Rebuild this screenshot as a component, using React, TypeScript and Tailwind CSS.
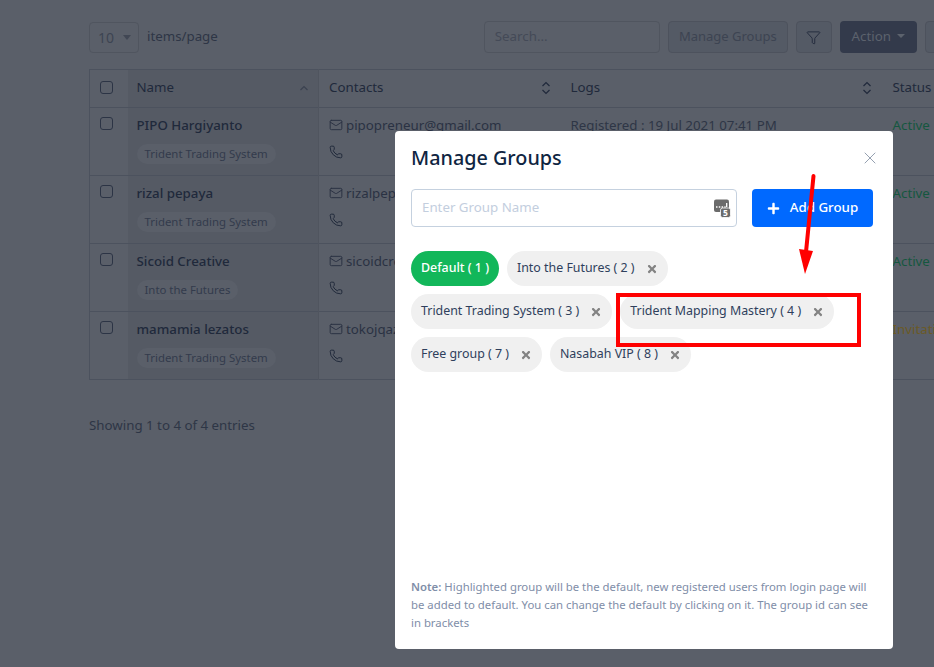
import React from 'react';
import { Mail, Phone, Funnel, X } from 'lucide-react';
import { FaPlus, FaTimes } from 'react-icons/fa';

const rows = [
  { name: 'PIPO Hargiyanto', group: 'Trident Trading System', email: 'pipopreneur@gmail.com', log: 'Registered : 19 Jul 2021 07:41 PM', status: 'Active' },
  { name: 'rizal pepaya', group: 'Trident Trading System', email: 'rizalpepaya@gmail.com', log: 'Registered : 19 Jul 2021 07:12 PM', status: 'Active' },
  { name: 'Sicoid Creative', group: 'Into the Futures', email: 'sicoidcreative@gmail.com', log: 'Registered : 18 Jul 2021 02:25 PM', status: 'Active' },
  { name: 'mamamia lezatos', group: 'Trident Trading System', email: 'tokojqaz@gmail.com', log: 'Registered : 18 Jul 2021 09:03 AM', status: 'Invitation' },
];

const groups = [
  [{ label: 'Into the Futures ( 2 )' }],
  [{ label: 'Trident Trading System ( 3 )' }, { label: 'Trident Mapping Mastery ( 4 )' }],
  [{ label: 'Free group ( 7 )' }, { label: 'Nasabah VIP ( 8 )' }],
];

function SortIcon() {
  return (
    <svg width="10" height="14" viewBox="0 0 10 14" fill="none" stroke="currentColor" strokeWidth="1.2">
      <path d="M1.5 5 5 1.5 8.5 5M1.5 9 5 12.5 8.5 9" />
    </svg>
  );
}

function Chip({ label }: { label: string }) {
  return (
    <div className="flex h-[35px] items-center gap-[11px] rounded-full bg-[#f0f0f0] px-[10px] text-[12.4px] text-[#2f3f5c]">
      <span>{label}</span>
      <FaTimes className="text-[12px] text-[#838383]" />
    </div>
  );
}

export default function App() {
  return (
    // page colours are already dimmed, the way they look under the modal backdrop
    <div className="relative h-[667px] w-[934px] overflow-hidden bg-[#5a5f69] text-[#20293b] [font-family:'Noto_Sans',sans-serif]">
      <div className="w-[1100px] pl-[89px] pt-[21px]">
        <div className="flex items-center">
          <div className="flex h-[31px] w-[50px] items-center justify-between rounded border border-[#50555f] pl-2 pr-[7px] text-[14px] text-[#3d4452]">
            10
            <span className="h-0 w-0 border-x-4 border-t-[5px] border-x-transparent border-t-[#414754]" />
          </div>
          <span className="ml-2 text-[13.3px] text-[#2e3646]">items/page</span>
          <div className="ml-[266px] flex h-[32px] w-[176px] items-center rounded border border-[#50555f] px-2.5 text-[13.3px] text-[#444a57]">Search...</div>
          <div className="ml-2 flex h-[32px] w-[120px] items-center justify-center rounded border border-[#4d525d] bg-[#545a65] text-[13px] text-[#3d4452]">Manage Groups</div>
          <div className="ml-2 flex h-[32px] w-[36px] items-center justify-center rounded border border-[#4d525d] bg-[#545a65] text-[#252d3f]">
            <Funnel size={15} strokeWidth={1.6} />
          </div>
          <div className="ml-2 flex h-[32px] w-[77px] items-center justify-center gap-1.5 rounded bg-[#333a4b] text-[13.3px] text-[#5c626d]">
            Action
            <span className="mb-0.5 h-0 w-0 border-x-4 border-t-[4px] border-x-transparent border-t-[#5c626d]" />
          </div>
          <div className="ml-2 h-[32px] w-[40px] rounded border border-[#4d525d] bg-[#545a65]" />
        </div>

        <table className="mt-4 table-fixed border-collapse border border-[#4c525e] text-[13.3px]">
          <thead>
            <tr className="h-[38px] border-b border-[#4c525e]">
              <th className="w-[38px] pl-[10px] text-left align-middle">
                <span className="-mt-[3px] block size-[13px] rounded-[3px] border border-[#2c3445]" />
              </th>
              <th className="w-[191px] bg-[#555a64] px-2.5 pb-0.5 pl-[9px] text-left font-normal">
                <div className="flex items-center justify-between">Name
                  <svg width="10" height="6" viewBox="0 0 10 6" fill="none" stroke="#3b4250" strokeWidth="1.2" className="mr-[-1px]"><path d="M1.5 5 5 1.5 8.5 5" /></svg>
                </div>
              </th>
              <th className="w-[242px] border-l border-[#50555f] px-2.5 pb-0.5 text-left font-normal">
                <div className="flex items-center justify-between">Contacts<SortIcon /></div>
              </th>
              <th className="w-[321px] px-2.5 pb-0.5 text-left font-normal">
                <div className="flex items-center justify-between">Logs<SortIcon /></div>
              </th>
              <th className="w-[150px] px-2.5 pb-0.5 pl-[11px] text-left font-normal">Status</th>
            </tr>
          </thead>
          <tbody>
            {rows.map((r) => (
              <tr key={r.name} className="h-[68px] border-b border-[#4c525e]">
                <td className="pl-[10px] pt-[9px] align-top">
                  <span className="block size-[13px] rounded-[3px] border border-[#2c3445]" />
                </td>
                <td className="bg-[#555a64] px-2.5 pl-[9px] pt-[7px] align-top">
                  <div className="leading-5 font-medium">{r.name}</div>
                  <span className="mt-[9px] inline-block rounded-full bg-[#5a5f69] px-2 text-[11.4px] leading-5 text-[#333b4c]">{r.group}</span>
                </td>
                <td className="border-l border-[#50555f] px-2.5 pt-[7px] align-top">
                  <div className="flex items-center gap-[3px] leading-5 text-[#2a3243]"><Mail size={14} strokeWidth={1.7} />{r.email}</div>
                  <div className="mt-[10px]"><Phone size={14} strokeWidth={1.7} /></div>
                </td>
                <td className="px-2.5 pt-[7px] align-top leading-5 text-[#2e3646]">{r.log}</td>
                <td className={`px-2.5 pl-[11px] pt-[7px] align-top leading-5 ${r.status === 'Active' ? 'text-[#15573f]' : 'text-[#6b5a26]'}`}>{r.status}</td>
              </tr>
            ))}
          </tbody>
        </table>

        <p className="mt-[35px] text-[13.3px] leading-5 text-[#2e3646]">Showing 1 to 4 of 4 entries</p>
      </div>

      {/* modal */}
      <div className="absolute left-[395px] top-[131px] flex h-[518px] w-[498px] flex-col rounded bg-white px-4 pb-[17px] pt-[14px]">
        <div className="flex items-center justify-between">
          <h2 className="text-[19.8px] leading-[26px] font-medium text-[#0f2542]">Manage Groups</h2>
          <X size={20} strokeWidth={1.1} className="-mr-[3px] text-[#8b97a8]" />
        </div>
        <div className="mt-[18px] flex gap-[15px]">
          <div className="flex h-[38px] w-[326px] items-center justify-between rounded border border-[#c5d1df] pl-2.5 pr-[5px] text-[13.3px] text-[#c3cede]">
            Enter Group Name
            <svg width="17" height="19" viewBox="0 0 17 19">
              <rect x="0" y="0.5" width="15" height="12.5" rx="2" fill="#6b6b6b" />
              <path d="M2 8h1.5M4.8 8h1.5M7.6 8h1.5M10.4 8h1.2M12.7 8V4" stroke="#fff" strokeWidth="1.3" />
              <rect x="6.5" y="9" width="10" height="9.5" rx="2" fill="#6b6b6b" stroke="#fff" strokeWidth="0.8" />
              <text x="11.5" y="17" textAnchor="middle" fontSize="8.5" fontWeight="700" fill="#fff">5</text>
            </svg>
          </div>
          <div className="flex h-[38px] w-[121px] items-center justify-center gap-[10px] rounded bg-[#0069ff] text-[13.3px] font-medium text-white">
            <FaPlus className="text-[13px]" />
            Add Group
          </div>
        </div>
        <div className="mt-6 flex flex-col gap-2">
          <div className="flex gap-2">
            <div className="flex h-[35px] w-[88px] items-center justify-center rounded-full bg-[#12b75a] text-[12.4px] font-medium text-white">Default ( 1 )</div>
            <Chip label={groups[0][0].label} />
          </div>
          {groups.slice(1).map((line) => (
            <div key={line[0].label} className="flex gap-2">
              {line.map((g) => <Chip key={g.label} label={g.label} />)}
            </div>
          ))}
        </div>
        <p className="mt-auto text-[11.35px] leading-[18px] text-[#7f8ea8]">
          <b className="font-semibold">Note:</b> Highlighted group will be the default, new registered users from login page will be added to default. You can change the default by clicking on it. The group id can see in brackets
        </p>
      </div>

      {/* red annotation drawn on the screenshot */}
      <div className="absolute left-[616px] top-[293px] h-[54px] w-[245px] border-4 border-[#ff0000]" />
      <svg className="absolute left-[795px] top-[172px]" width="24" height="104" viewBox="0 0 24 104">
        <path d="M18.5 4 11 80" stroke="#ff0000" strokeWidth="4" strokeLinecap="round" />
        <path d="M4 77 18 79 10 102Z" fill="#ff0000" />
      </svg>
    </div>
  );
}
